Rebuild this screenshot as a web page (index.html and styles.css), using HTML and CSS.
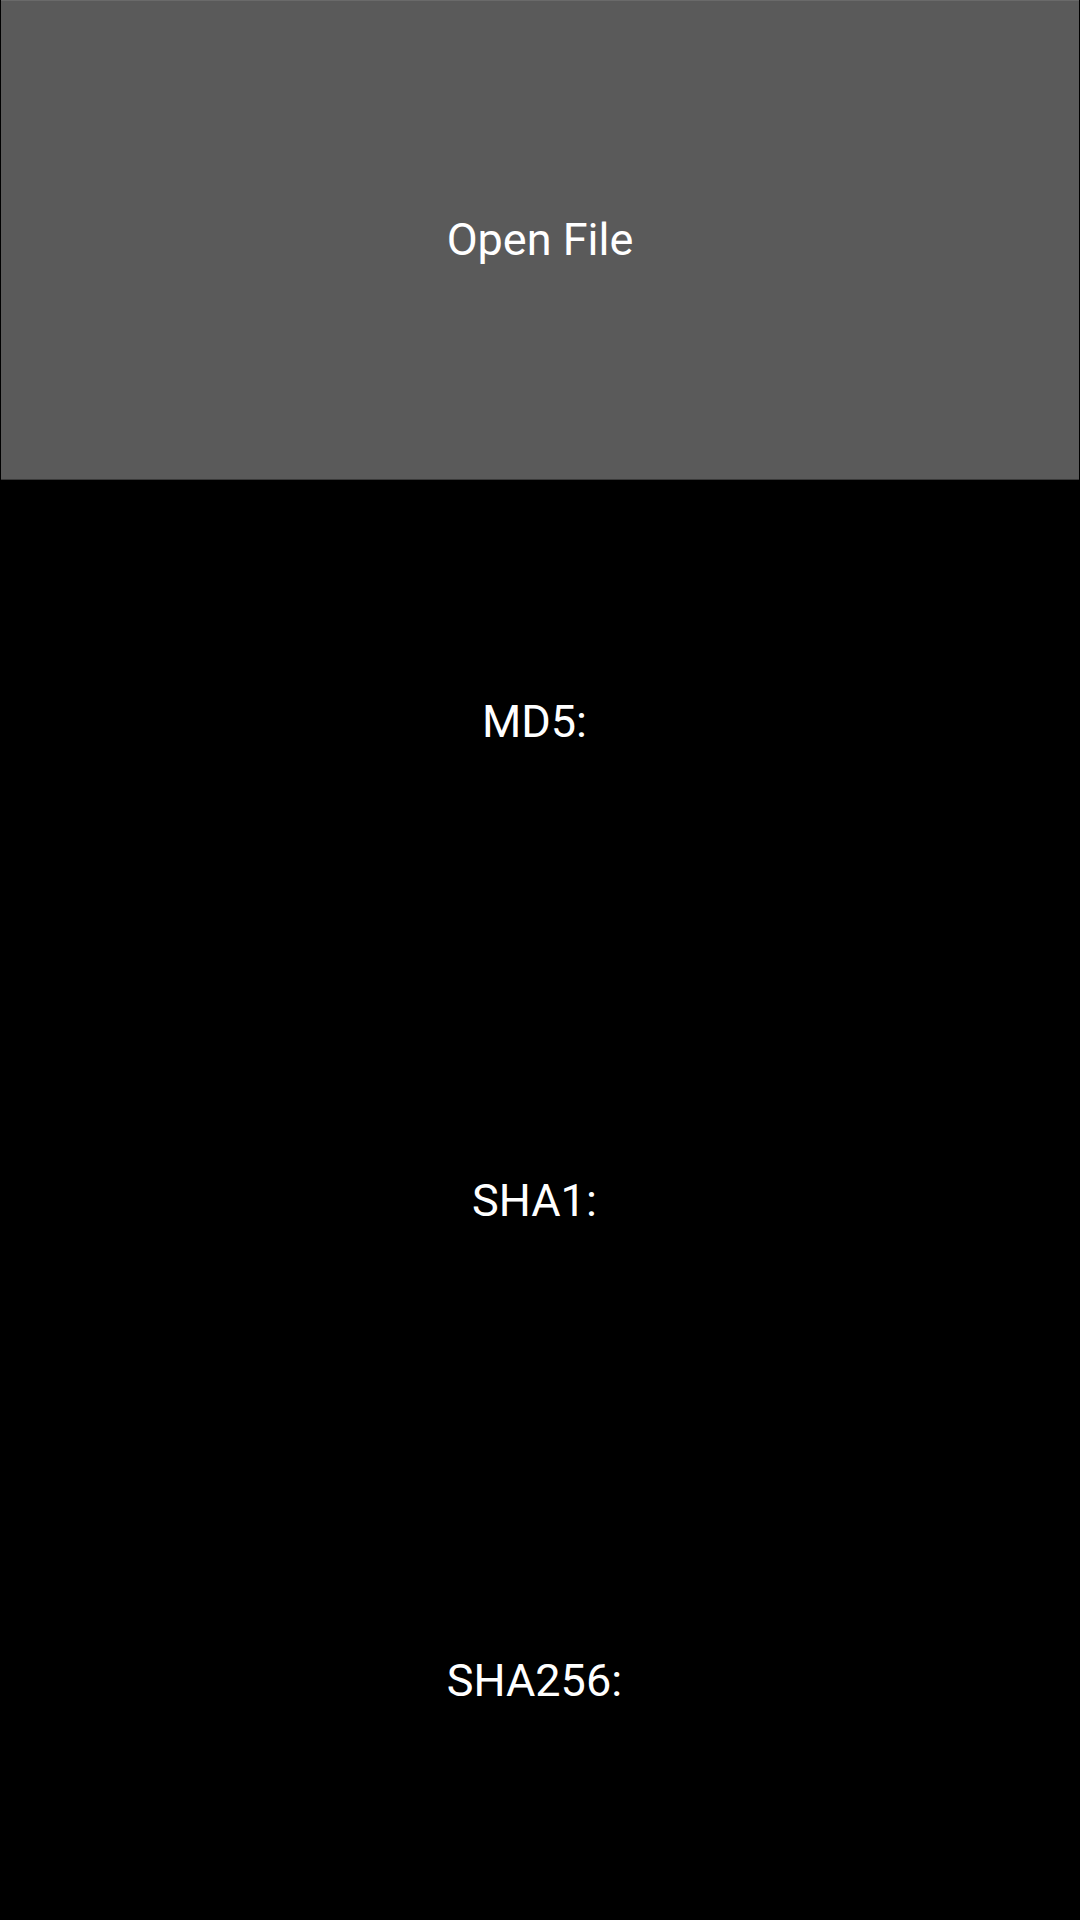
FILE: index.html
```html
<!DOCTYPE html>
<html>
<head>
<meta charset="utf-8">
<link rel="stylesheet" href="styles.css">
</head>
<body>
<main class="app">
  <div class="cell cell-button">
    <button class="open-btn">Open File</button>
  </div>
  <div class="cell"><span class="label">MD5: </span></div>
  <div class="cell"><span class="label">SHA1: </span></div>
  <div class="cell"><span class="label">SHA256: </span></div>
</main>
</body>
</html>
```
FILE: styles.css
```css
html, body {
  margin: 0;
  padding: 0;
  background: #000;
}
.app {
  width: 1080px;
  height: 1920px;
  display: flex;
  flex-direction: column;
  font-family: Roboto, "Noto Sans", sans-serif;
}
.cell {
  flex: 1 1 0;
  display: flex;
  align-items: center;
  justify-content: center;
}
.cell-button {
  align-items: stretch;
  justify-content: stretch;
  padding: 0 1px 2px 1px;
}
.open-btn {
  flex: 1;
  margin: 0;
  border: none;
  border-top: 1px solid #6a6a6a;
  border-bottom: 1px solid #3a3a3a;
  background: #5a5a5a;
  color: #fff;
  font-family: Roboto, "Noto Sans", sans-serif;
  font-size: 45px;
  padding: 0;
}
.label {
  color: #fff;
  font-size: 45px;
  white-space: pre;
}
```
